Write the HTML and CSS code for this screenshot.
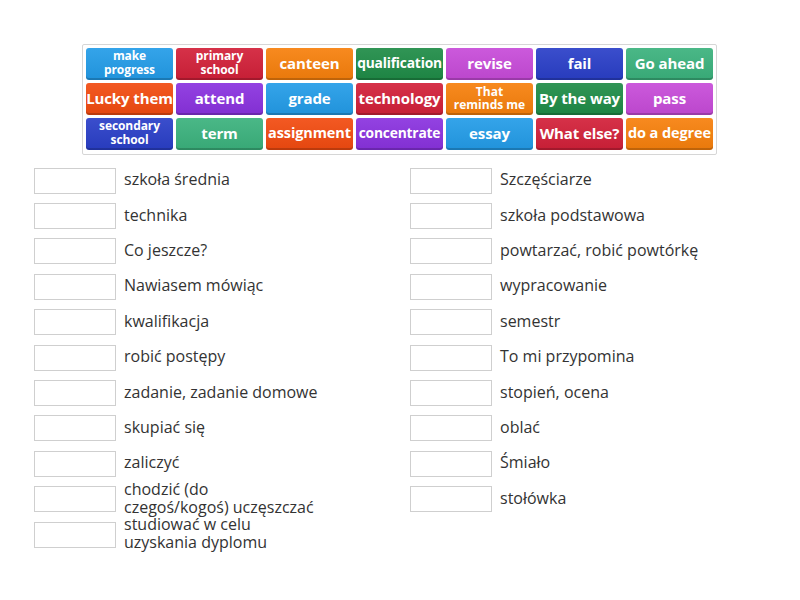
FILE: index.html
```html
<!doctype html>
<html lang="pl">
	<head>
		<meta charset="UTF-8" />
		<title>Dopasuj</title>
		<link rel="stylesheet" href="styles.css">
	</head>
	<body>
		<section class="board">
			<div class="tile blue two">make<br>progress</div>
			<div class="tile red two">primary<br>school</div>
			<div class="tile orange">canteen</div>
			<div class="tile green sm">qualification</div>
			<div class="tile pink">revise</div>
			<div class="tile navy">fail</div>
			<div class="tile teal">Go ahead</div>

			<div class="tile redorange">Lucky them</div>
			<div class="tile purple">attend</div>
			<div class="tile blue">grade</div>
			<div class="tile red">technology</div>
			<div class="tile orange two xs">That<br>reminds me</div>
			<div class="tile green">By the way</div>
			<div class="tile pink">pass</div>

			<div class="tile navy two">secondary<br>school</div>
			<div class="tile teal">term</div>
			<div class="tile redorange md">assignment</div>
			<div class="tile purple sm">concentrate</div>
			<div class="tile blue">essay</div>
			<div class="tile red">What else?</div>
			<div class="tile orange md">do a degree</div>
		</section>

		<section class="lists">
			<div class="col">
				<div class="item"><span class="drop"></span><p>szkoła średnia</p></div>
				<div class="item"><span class="drop"></span><p>technika</p></div>
				<div class="item"><span class="drop"></span><p>Co jeszcze?</p></div>
				<div class="item"><span class="drop"></span><p>Nawiasem mówiąc</p></div>
				<div class="item"><span class="drop"></span><p>kwalifikacja</p></div>
				<div class="item"><span class="drop"></span><p>robić postępy</p></div>
				<div class="item"><span class="drop"></span><p>zadanie, zadanie domowe</p></div>
				<div class="item"><span class="drop"></span><p>skupiać się</p></div>
				<div class="item"><span class="drop"></span><p>zaliczyć</p></div>
				<div class="item"><span class="drop"></span><p>chodzić (do<br>czegoś/kogoś) uczęszczać</p></div>
				<div class="item"><span class="drop"></span><p>studiować w celu<br>uzyskania dyplomu</p></div>
			</div>
			<div class="col">
				<div class="item"><span class="drop"></span><p>Szczęściarze</p></div>
				<div class="item"><span class="drop"></span><p>szkoła podstawowa</p></div>
				<div class="item"><span class="drop"></span><p>powtarzać, robić powtórkę</p></div>
				<div class="item"><span class="drop"></span><p>wypracowanie</p></div>
				<div class="item"><span class="drop"></span><p>semestr</p></div>
				<div class="item"><span class="drop"></span><p>To mi przypomina</p></div>
				<div class="item"><span class="drop"></span><p>stopień, ocena</p></div>
				<div class="item"><span class="drop"></span><p>oblać</p></div>
				<div class="item"><span class="drop"></span><p>Śmiało</p></div>
				<div class="item"><span class="drop"></span><p>stołówka</p></div>
			</div>
		</section>
	</body>
</html>
```

FILE: styles.css
```css
* {
	margin: 0;
	padding: 0;
	box-sizing: border-box;
}

body {
	background: #fff;
	font-family: "Open Sans", "Liberation Sans", sans-serif;
}

.board {
	width: 635px;
	margin: 44px 0 0 82px;
	padding: 3px 3px 4px;
	border: 1px solid #d6d6d6;
	border-radius: 2px;
	display: grid;
	grid-template-columns: repeat(7, 87px);
	grid-auto-rows: 32px;
	gap: 3px;
}

.tile {
	display: flex;
	align-items: center;
	justify-content: center;
	text-align: center;
	padding-bottom: 3px;
	border-radius: 3px;
	color: #fff;
	font-weight: 700;
	font-size: 15px;
	line-height: 16px;
	white-space: nowrap;
	letter-spacing: -0.1px;
	box-shadow: inset 0 -2px 0 rgba(0, 0, 0, 0.18);
	background-image: linear-gradient(rgba(255, 255, 255, 0.08), rgba(0, 0, 0, 0.06));
}

.tile.md {
	font-size: 14.5px;
	letter-spacing: -0.1px;
}

.tile.sm {
	font-size: 13.8px;
	letter-spacing: -0.2px;
}

.tile.two {
	font-size: 12px;
	line-height: 14px;
	padding-bottom: 2px;
}

.tile.xs {
	font-size: 12px;
	line-height: 13px;
	letter-spacing: 0;
}

.blue { background-color: #239ce8; }
.red { background-color: #d22039; }
.orange { background-color: #f7800c; }
.green { background-color: #1f8c47; }
.pink { background-color: #c74bd9; }
.navy { background-color: #2a3fc8; }
.teal { background-color: #3bb27d; }
.redorange { background-color: #f24b10; }
.purple { background-color: #8a32df; }

.lists {
	display: flex;
	margin: 8px 0 0 34px;
}

.col {
	width: 376px;
	display: grid;
	grid-auto-rows: 35.4px;
	align-content: start;
}

.item {
	display: flex;
	align-items: center;
}

.drop {
	width: 82px;
	height: 26px;
	border: 1px solid #cfcfcf;
	flex-shrink: 0;
}

.item p {
	margin-left: 8px;
	padding-bottom: 3px;
	font-size: 16px;
	line-height: 18px;
	color: #333;
	white-space: nowrap;
}
```
